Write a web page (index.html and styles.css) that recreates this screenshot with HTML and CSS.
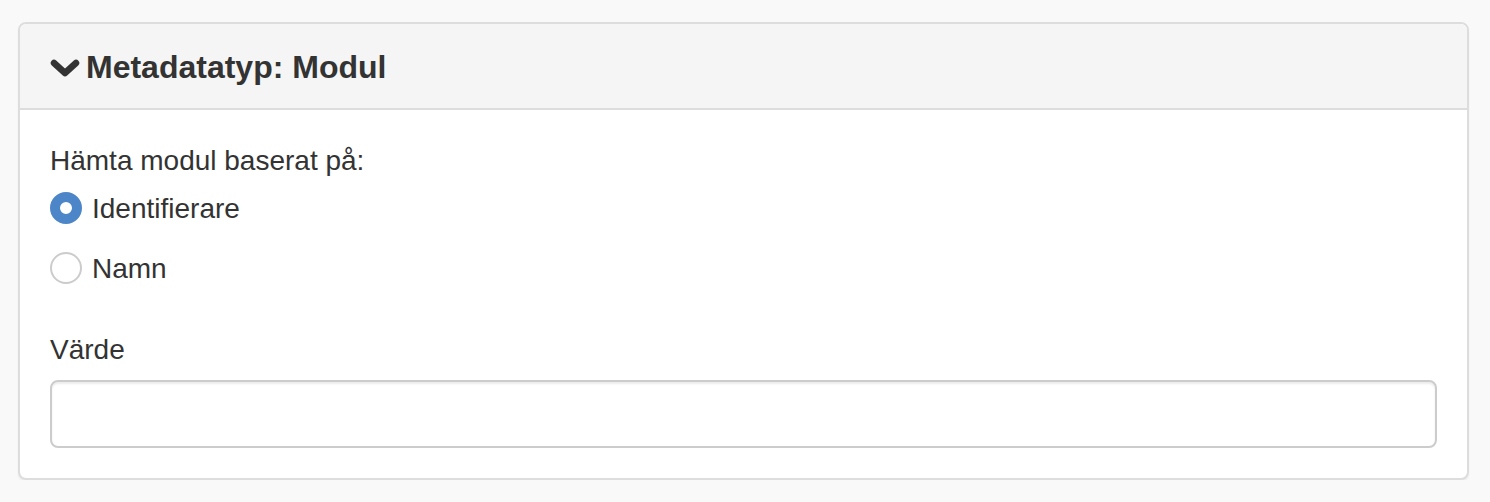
FILE: index.html
```html
<!DOCTYPE html>
<html lang="sv">
<head>
    <meta charset="UTF-8">
    <meta name="viewport" content="width=device-width, initial-scale=1.0">
    <title>Metadatatyp: Modul</title>
    <link rel="stylesheet" href="styles.css">
</head>
<body>
    <div class="panel">
        <div class="panel-heading">
            <h4 class="panel-title">
                <svg class="chevron" width="30" height="18" viewBox="0 0 30 18">
                    <path d="M4 4 L15 14 L26 4" fill="none" stroke="#333" stroke-width="6.5" stroke-linecap="round" stroke-linejoin="round"/>
                </svg>
                Metadatatyp: Modul
            </h4>
        </div>
        <div class="panel-body">
            <div class="form-group">
                <label class="control-label">Hämta modul baserat på:</label>
                <div class="radio">
                    <label>
                        <input type="radio" name="by" value="id" checked>
                        Identifierare
                    </label>
                </div>
                <div class="radio">
                    <label>
                        <input type="radio" name="by" value="name">
                        Namn
                    </label>
                </div>
            </div>
            <div class="form-group last">
                <label class="control-label" for="value">Värde</label>
                <input type="text" id="value" class="form-control">
            </div>
        </div>
    </div>
</body>
</html>
```

FILE: styles.css
```css
:root {
    --text-color: #333333;
    --border-color: #dddddd;
    --primary-color: #4d86c8;
}
* {
    margin: 0;
    padding: 0;
    box-sizing: border-box;
}
body {
    font-family: 'Liberation Sans', Arial, sans-serif;
    font-size: 28px;
    line-height: 40px;
    color: var(--text-color);
    background-color: #f9f9f9;
    padding: 22px 21px 0 18px;
}
.panel {
    background-color: #ffffff;
    border: 2px solid var(--border-color);
    border-radius: 8px;
    box-shadow: 0 2px 2px rgba(0,0,0,0.05);
}
.panel-heading {
    background-color: #f5f5f5;
    border-bottom: 2px solid var(--border-color);
    border-radius: 6px 6px 0 0;
    padding: 25px 30px 23px 30px;
}
.panel-title {
    display: flex;
    align-items: center;
    gap: 6px;
    font-size: 32px;
    line-height: 36px;
    font-weight: bold;
}
.chevron {
    margin-top: 1px;
}
.panel-body {
    padding: 31px 30px 30px;
}
.form-group {
    margin-bottom: 41px;
}
.form-group.last {
    margin-bottom: 0;
}
.control-label {
    display: block;
    margin-bottom: 8px;
}
.form-group.last .control-label {
    margin-bottom: 10px;
}
.radio + .radio {
    margin-top: 20px;
}
.radio label {
    display: flex;
    align-items: center;
    gap: 10px;
}
input[type="radio"] {
    appearance: none;
    width: 32px;
    height: 32px;
    border: 2px solid #cccccc;
    border-radius: 50%;
    background-color: #ffffff;
    margin-top: -2px;
}
input[type="radio"]:checked {
    border: 10px solid var(--primary-color);
}
.form-control {
    display: block;
    width: 100%;
    height: 68px;
    border: 2px solid #cccccc;
    border-radius: 8px;
    box-shadow: inset 0 2px 2px rgba(0,0,0,0.075);
    font: inherit;
    padding: 12px 24px;
}
```
